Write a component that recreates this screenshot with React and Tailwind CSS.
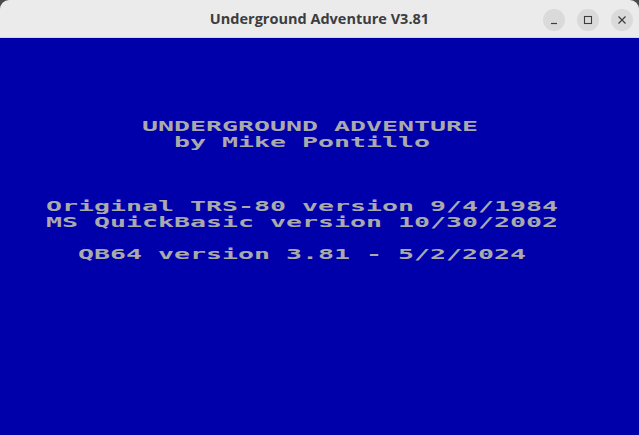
const lines = [
  '',
  '',
  '',
  '',
  '',
  '         UNDERGROUND ADVENTURE',
  '           by Mike Pontillo',
  '',
  '',
  '',
  '   Original TRS-80 version 9/4/1984',
  '   MS QuickBasic version 10/30/2002',
  '',
  '     QB64 version 3.81 - 5/2/2024',
];

const WindowButton = ({ children }) => (
  <div className="w-[22px] h-[22px] rounded-full bg-[#dadada] flex items-center justify-center text-[#3d3d3d]">
    {children}
  </div>
);

const App = () => {
  return (
    <div className="w-[639px] h-[435px] bg-[#4a4a4a] flex flex-col">
      <div className="h-[38px] bg-[#ebebeb] rounded-t-[9px] border-b border-[#d6d6d6] relative flex items-center justify-center shrink-0">
        <span className="text-[14.5px] font-bold text-[#3d3d3d] font-['Open_Sans',sans-serif] mt-[1px]">
          Underground Adventure V3.81
        </span>
        <div className="absolute right-[6px] top-[9px] flex gap-[12px]">
          <WindowButton>
            <svg width="10" height="10" viewBox="0 0 10 10">
              <path d="M2 8.5h6" stroke="currentColor" strokeWidth="1.2" />
            </svg>
          </WindowButton>
          <WindowButton>
            <svg width="10" height="10" viewBox="0 0 10 10">
              <rect x="1.5" y="1.5" width="7" height="7" fill="none" stroke="currentColor" strokeWidth="1.1" />
            </svg>
          </WindowButton>
          <WindowButton>
            <svg width="10" height="10" viewBox="0 0 10 10">
              <path d="M1.5 1.5l7 7M8.5 1.5l-7 7" stroke="currentColor" strokeWidth="1.2" />
            </svg>
          </WindowButton>
        </div>
      </div>
      <div className="flex-1 bg-[#0000aa] font-['DejaVu_Sans_Mono',monospace] text-[14px] leading-[16px]">
        {lines.map((line, i) => (
          <div key={i} className="h-[16px] leading-[16px] -ml-[2px]">
            <span className="inline-block align-top whitespace-pre origin-left scale-x-[1.898] leading-[16px] font-bold text-[#aaaaaa]">
              {line}
            </span>
          </div>
        ))}
      </div>
    </div>
  );
};

export default App;
